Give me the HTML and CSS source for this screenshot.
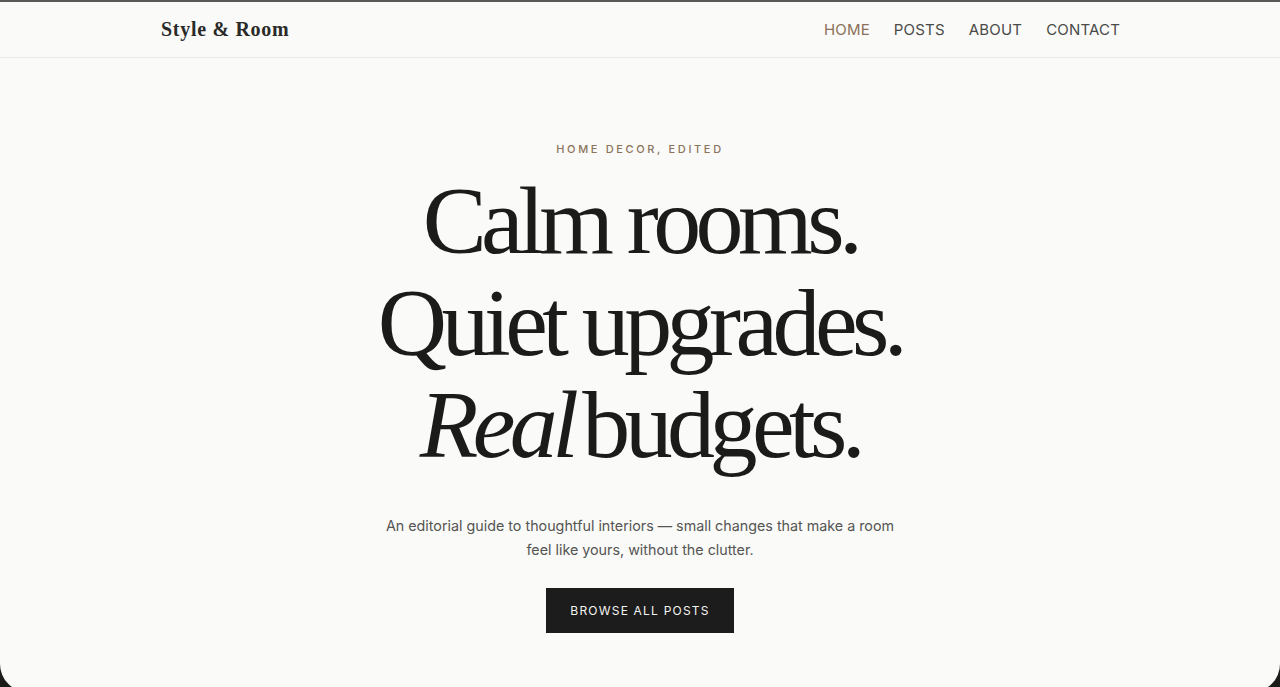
FILE: index.html
```html
<!DOCTYPE html>
<html lang="en">
<head>
<meta charset="utf-8">
<title>Style &amp; Room</title>
<link rel="stylesheet" href="styles.css">
</head>
<body>
<div class="page">
  <header class="site-header">
    <div class="container header-inner">
      <a class="logo" href="#">Style &amp; Room</a>
      <nav class="nav">
        <a class="nav-link active" href="#">HOME</a>
        <a class="nav-link" href="#">POSTS</a>
        <a class="nav-link" href="#">ABOUT</a>
        <a class="nav-link" href="#">CONTACT</a>
      </nav>
    </div>
  </header>
  <main class="hero">
    <p class="eyebrow">HOME DECOR, EDITED</p>
    <h1 class="headline">
      <span class="line">Calm rooms.</span>
      <span class="line">Quiet upgrades.</span>
      <span class="line"><em>Real</em> budgets.</span>
    </h1>
    <p class="lede">An editorial guide to thoughtful interiors — small changes that make a room feel like yours, without the clutter.</p>
    <a class="btn" href="#">BROWSE ALL POSTS</a>
  </main>
</div>
</body>
</html>
```

FILE: styles.css
```css
html, body {
  margin: 0;
  padding: 0;
  height: 100%;
  overflow: hidden;
}
body {
  background: #1b1b1a;
  font-family: "Inter", "Liberation Sans", sans-serif;
}
.page {
  box-sizing: border-box;
  height: 692px;
  background: #fafaf8;
  border-top: 2px solid #585856;
  border-radius: 0 0 28px 28px;
  overflow: hidden;
}
.site-header {
  border-bottom: 1px solid #ebe9e4;
}
.container {
  max-width: 960px;
  margin: 0 auto;
}
.header-inner {
  height: 55px;
  display: flex;
  align-items: center;
  justify-content: space-between;
}
.logo {
  font-family: "Liberation Serif", "Times New Roman", serif;
  font-weight: 700;
  font-size: 20px;
  letter-spacing: 0.035em;
  color: #2a2a28;
  text-decoration: none;
  padding-left: 1px;
}
.nav {
  display: flex;
  gap: 24px;
}
.nav-link {
  font-size: 15px;
  letter-spacing: 0.012em;
  color: #4a4a48;
  text-decoration: none;
}
.nav-link.active {
  color: #8a7058;
}
.hero {
  display: flex;
  flex-direction: column;
  align-items: center;
  text-align: center;
  padding-top: 83px;
}
.eyebrow {
  margin: 0;
  font-size: 11px;
  line-height: 16px;
  font-weight: 500;
  letter-spacing: 0.24em;
  color: #8b735c;
}
.headline {
  margin: 13px 0 0;
  font-family: "Liberation Serif", "Times New Roman", serif;
  font-weight: 400;
  font-size: 96px;
  line-height: 102px;
  letter-spacing: -0.058em;
  color: #1b1b1a;
}
.headline .line {
  display: block;
}
.headline em {
  font-style: italic;
  margin-right: -0.1em;
}
.lede {
  margin: 38px 0 0;
  max-width: 520px;
  font-size: 14.3px;
  line-height: 24px;
  color: #555553;
}
.btn {
  margin-top: 26px;
  height: 45px;
  padding: 0 24px;
  display: flex;
  align-items: center;
  background: #1c1c1c;
  color: #f4f4f2;
  font-size: 12px;
  font-weight: 400;
  letter-spacing: 0.1em;
  text-decoration: none;
}
```
